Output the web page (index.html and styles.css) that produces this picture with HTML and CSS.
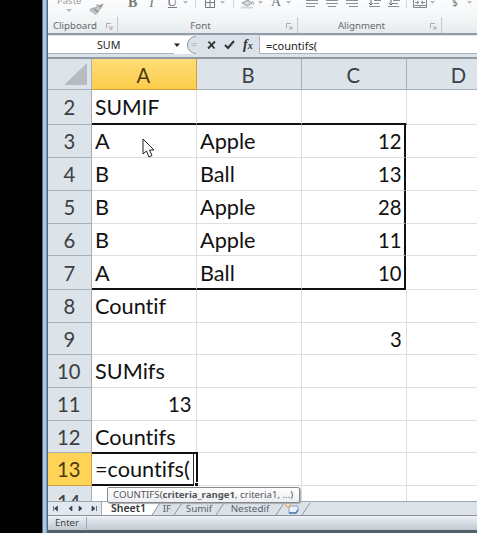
FILE: index.html
```
<!DOCTYPE html>
<html lang="en">
<head>
<meta charset="utf-8">
<title>Spreadsheet</title>
<link rel="stylesheet" href="styles.css">
</head>
<body>
<div class="screen">
  <div class="edge"></div>
  <main class="window">
    <section class="ribbon">
      <svg class="tools" width="429" height="17" viewBox="48 0 429 17">
        <g fill="none" stroke="#9a9ea1">
          <path d="M66 9h6l-3 3z" fill="#b9bcbe" stroke="none"/>
          <path d="M97 4.500l5 2-6 8-6-4 1-2 6-1z" fill="#c4c7c9" stroke="#aaa"/>
          <path d="M99 7l4-3M94 9l4 3" stroke="#888" stroke-width="1.500"/>
          <path d="M183 1h5l-2.500 3zM220 1h5l-2.500 3zM258 1h5l-2.500 3zM286 1h5l-2.500 3zM430 1h5l-2.500 3zM467 1h5l-2.500 3z" fill="#b8bbbe" stroke="none"/>
          <path d="M195.500 0v8M233.500 0v8M406.500 0v8" stroke="#d3d7db"/>
          <path d="M205.500 0v7.500h9V0M205 2.500h9M210 0v7" stroke="#77797b"/>
          <path d="M242 3l6-3 4 3-5 3zM252 1c3 2 1 3 1 4" fill="#d5d7d8"/>
          <path d="M241 7.500h12" stroke="#d3d5d6" stroke-width="2"/>
          <path d="M306 .5h12M306 3.500h12M306 6.500h9M326 .5h12M326 3.500h12M328 6.500h8M346 .5h12M346 3.500h12M349 6.500h9M374 .5h7M374 3.500h5M369 6.500h11M393 .5h7M393 3.500h5M388 6.500h11" stroke="#8c8e90"/>
          <path d="M371 0v5M369 3l2 2 2-2M391 0v5M389 3l2 2 2-2" stroke="#696b6d"/>
          <path d="M413.500 0v7.500h13V0M414 5.500h12M420 5v2M415 2.500h3M422 2.500h3M417 1l2 1.500-2 1.500M423 1l-2 1.500 2 1.500" stroke="#88898b"/>
        </g>
        <g class="glyphs">
          <text x="57" y="4" class="paste">Paste</text>
          <text x="128" y="6.500" font-weight="bold">B</text>
          <text x="154" y="6.500" font-style="italic" text-anchor="end">I</text>
          <text x="167" y="5.500">U</text><path d="M168 7.500h9" stroke="#77797b"/>
          <text x="271" y="6">A</text>
          <text x="452" y="6" class="dollar">$</text>
        </g>
      </svg>
      <div class="groups">
        <div class="group clip"><span>Clipboard</span><svg class="launch" width="7" height="7"><path d="M.5 5V.5H5M3 3l3 3M6 3v3H3"/></svg></div>
        <div class="group font"><span>Font</span><svg class="launch" width="7" height="7"><path d="M.5 5V.5H5M3 3l3 3M6 3v3H3"/></svg></div>
        <div class="group align"><span>Alignment</span><svg class="launch" width="7" height="7"><path d="M.5 5V.5H5M3 3l3 3M6 3v3H3"/></svg></div>
        <div class="group"></div>
      </div>
    </section>
    <section class="formula-bar">
      <div class="name-box">SUM</div>
      <svg class="controls" width="85" height="18" viewBox="0 0 85 18">
        <path d="M0 7.500h6L3 11z" fill="#222"/>
        <path d="M85 0H22a9 9 0 0 0 0 18h63z" fill="#dce2e9"/>
        <path d="M22 .5a8.500 8.500 0 0 0 0 17" fill="none" stroke="#929ca6"/>
        <path d="M17 7.500h6M18 9.500h4" stroke="#b9bfc5"/>
        <path d="M34.500 5.500l6 7M41 5.500L34 12.500" stroke="#333" stroke-width="1.800"/>
        <path d="M51 9l3 3 6-7" stroke="#333" stroke-width="2" fill="none"/>
        <text x="69" y="13" class="fx">f<tspan font-size="10">x</tspan></text>
      </svg>
      <div class="formula">=countifs(</div>
    </section>
    <section class="sheet">
      <div class="head corner"><svg width="24" height="22"><path d="M24 0v22H1z" fill="#b7bcc1"/></svg></div><div class="head picked"><b>A</b></div><div class="head"><b>B</b></div><div class="head"><b>C</b></div><div class="head"><b>D</b></div>
      <div class="num"><b>2</b></div><div class="u"><b class="caps">SUMIF</b></div><div class="u"></div><div class="u"></div><div></div>
      <div class="num"><b>3</b></div><div><b>A</b></div><div><b>Apple</b></div><div class="n r"><b>12</b></div><div></div>
      <div class="num"><b>4</b></div><div><b>B</b></div><div><b>Ball</b></div><div class="n r"><b>13</b></div><div></div>
      <div class="num"><b>5</b></div><div><b>B</b></div><div><b>Apple</b></div><div class="n r"><b>28</b></div><div></div>
      <div class="num"><b>6</b></div><div><b>B</b></div><div><b>Apple</b></div><div class="n r"><b>11</b></div><div></div>
      <div class="num"><b>7</b></div><div class="u"><b>A</b></div><div class="u"><b>Ball</b></div><div class="n r u"><b>10</b></div><div></div>
      <div class="num"><b>8</b></div><div><b>Countif</b></div><div></div><div></div><div></div>
      <div class="num"><b>9</b></div><div></div><div></div><div class="n"><b>3</b></div><div></div>
      <div class="num"><b>10</b></div><div><b>SUMifs</b></div><div></div><div></div><div></div>
      <div class="num"><b>11</b></div><div class="n"><b>13</b></div><div></div><div></div><div></div>
      <div class="num"><b>12</b></div><div><b>Countifs</b></div><div></div><div></div><div></div>
      <div class="num picked"><b>13</b></div><div class="active"><b>=countifs(</b><i></i></div><div></div><div></div><div></div>
      <div class="num"><b>14</b></div><div></div><div></div><div></div><div></div>
    </section>
    <section class="tabs">
      <svg class="nav" width="54" height="14" viewBox="0 0 54 14"><path d="M5.500 4v5M9.500 4v5L6.500 6.500zM24 4v5l-3-2.500zM31 4v5l3-2.500zM44 4v5l3-2.500zM48.500 4v5" fill="#344457" stroke="#344457" stroke-width=".7"/><path d="M53.500 0v14" stroke="#a5aeb7"/></svg>
      <span class="tab current">Sheet1</span><svg class="slash" width="10" height="14"><path d="M0 0H9L1 13H0z" class="fill"/><path d="M1 13L9 1"/></svg>
      <span class="tab if">IF</span><svg class="slash" width="10" height="14"><path d="M1 13L9 1"/></svg>
      <span class="tab sumif">Sumif</span><svg class="slash" width="10" height="14"><path d="M1 13L9 1"/></svg>
      <span class="tab nested">Nestedif</span><svg class="slash" width="10" height="14"><path d="M1 13L9 1"/></svg>
      <svg class="new" width="16" height="14"><path d="M4 4h9v5l-2 2H4z" fill="#e9f2fc" stroke="#8c9dc0"/><path d="M4 11h7l2-3" stroke="#5475b8" stroke-width="1.500" fill="none"/><path d="M3 0v6M0 3h6M1 1l4 4M5 1L1 5" stroke="#e39a42"/><circle cx="3" cy="3" r="1.200" fill="#fff3bd"/></svg><svg class="slash" width="10" height="14"><path d="M1 13L9 1"/></svg>
    </section>
    <footer class="status"><span>Enter</span></footer>
    <div class="bottom"></div>
  </main>
  <div class="tooltip"><span>COUNTIFS(<strong>criteria_range1</strong>, criteria1, ...)</span></div>
  <svg class="pointer" width="13" height="20" viewBox="0 0 13 20"><path d="M1 1v15l3.500-3 2.500 6 3-1.500-2.500-5.500H12z" fill="#fff" stroke="#222"/></svg>
</div>
</body>
</html>
```
FILE: styles.css
```
* { box-sizing: border-box; }
body { margin: 0; overflow: hidden; background: #000; font-family: "Noto Sans", sans-serif; }
svg { display: block; flex: none; }
.screen { position: relative; display: flex; width: 477px; height: 533px; }
.edge { flex: none; width: 48px; background: linear-gradient(90deg, #000 42px, #46515d 42px, #6f8295 43px, #a8c9eb 43px, #a8c9eb 46px, #586b7c 47px); }
.window { width: 429px; height: 533px; display: flex; flex-direction: column; overflow: hidden; background: #d9e1e9; }
.ribbon { height: 33px; flex: none; background: linear-gradient(#fbfcfd, #f3f6f7 55%, #e6eaed); }
.tools { overflow: hidden; }
.glyphs { font: 14px "Liberation Serif", serif; fill: #77797b; }
.glyphs .paste { font: 9.500px "Noto Sans", sans-serif; fill: #999; }
.glyphs .dollar { font: 10.500px "Noto Sans", sans-serif; }
.groups { display: flex; height: 16px; }
.group { display: flex; justify-content: center; align-items: center; position: relative; font-size: 9.700px; color: #65696d; flex: 1; line-height: 13px; box-shadow: inset -1px 0 #c3c9ce; }
.group.clip { flex: 0 0 70px; padding-right: 16px; }
.group.font { flex: 0 0 180px; padding-right: 15px; }
.group.align { flex: 0 0 144px; padding-right: 17px; }
.group:last-child { box-shadow: none; }
.launch { position: absolute; right: 5px; top: 6px; fill: none; stroke: #a4aab0; }
.formula-bar { height: 26px; border-top: 2px solid #939ca6; border-bottom: 2px solid #8f9aa5; padding: 1px 0 3px; display: flex; align-items: stretch; background: #dce2e9; flex: none; }
.name-box { width: 126px; background: #fff; font-size: 10.700px; line-height: 19px; padding-left: 49px; color: #222; border-bottom: 1px solid #aab3bd; }
.controls { background: #fff; width: 85px; height: 18px; }
.fx { font: italic bold 14px "Liberation Serif", serif; fill: #333; }
.formula { flex: 1; background: #fff; border-left: 1px solid #aab3bd; border-bottom: 1px solid #aab3bd; padding-left: 6px; font-size: 11px; line-height: 19px; color: #222; }
.sheet { flex: none; height: 442px; overflow: hidden; display: grid; grid-template-columns: 44px 105px 105px 105px 105px; grid-template-rows: 31px 35px 33px 33px 33px 32px 34px 33px 32px 33px 33px 32px 33px 33px; font: 22px Lato, sans-serif; font-variant-ligatures: none; color: #111; background: #fff; }
.sheet > div { position: relative; display: flex; align-items: center; padding: 0 4px 1px 3px; border-right: 1px solid #dcdee0; border-bottom: 1px solid #dcdee0; white-space: nowrap; }
.sheet b { font-weight: 400; transform-origin: left; transform: scaleX(.985); }
.sheet b.caps { transform: scaleX(.96); }
.sheet > .n { justify-content: flex-end; }
.sheet > .n b { transform: scaleX(.92); transform-origin: right; }
.sheet > .u { border-bottom: 2px solid #111; padding-bottom: 0; }
.sheet > .r { border-right: 2px solid #111; margin-right: 1px; padding-right: 2px; }
.sheet > .head, .sheet > .num { background: #dce3e9; justify-content: center; color: #3b4045; border-color: #a7b0b8; }
.sheet > .head { padding-top: 2px; }
.sheet > .head b, .sheet > .num b { transform: scaleX(.92); transform-origin: center; }
.sheet > .corner { justify-content: flex-end; padding: 0 4px 0 0; }
.sheet > .picked { background: #ffd357; color: #4b3b10; border-color: #cfa13c; }
.sheet > .head.picked { background: linear-gradient(#ffdd75, #fbcd4d); }
.sheet > .active { border: 2px solid #111; border-left: 0; padding-top: 0; margin-top: -1px; margin-right: -1px; z-index: 1; box-shadow: inset -2px 0 #fff, inset -3px 0 #333; }
.active i { position: absolute; right: -2px; bottom: -2px; width: 4px; height: 4px; background: #111; border: 1px solid #fff; border-right: 0; border-bottom: 0; }
.tabs { height: 14px; border-top: 1px solid #9da7af; background: #dce3e8; display: flex; flex: none; align-items: center; overflow: hidden; }
.nav { background: #e2e8ef; }
.tab { font-size: 9.800px; line-height: 13px; color: #59616b; text-align: center; white-space: nowrap; }
.current { width: 49px; padding-left: 4px; font-weight: 600; font-size: 10.500px; color: #333; background: #fff; }
.if { width: 12px; }
.sumif { width: 32px; }
.nested { width: 50px; }
.slash { fill: none; stroke: #8a959f; }
.slash .fill { fill: #fff; stroke: none; }
.status { height: 15px; flex: none; display: flex; align-items: center; border-top: 1px solid #89949e; background: linear-gradient(#f0f3f6, #d9dfe6 40%, #c1c8d1); }
.status span { width: 39px; padding-left: 7px; font-size: 9.500px; line-height: 12px; color: #444; border-right: 1px solid #a2aab3; }
.bottom { height: 3px; flex: none; background: #53616b; }
.tooltip { position: absolute; left: 107px; top: 487px; width: 193px; height: 16px; border: 1px solid #85898d; border-radius: 2px; background: linear-gradient(#fff, #eceef3); box-shadow: 1px 1px 1px #aaa; font-size: 9.650px; line-height: 14px; padding-left: 5px; color: #555; white-space: nowrap; z-index: 3; }
.pointer { position: absolute; left: 142px; top: 138px; z-index: 3; }
```
